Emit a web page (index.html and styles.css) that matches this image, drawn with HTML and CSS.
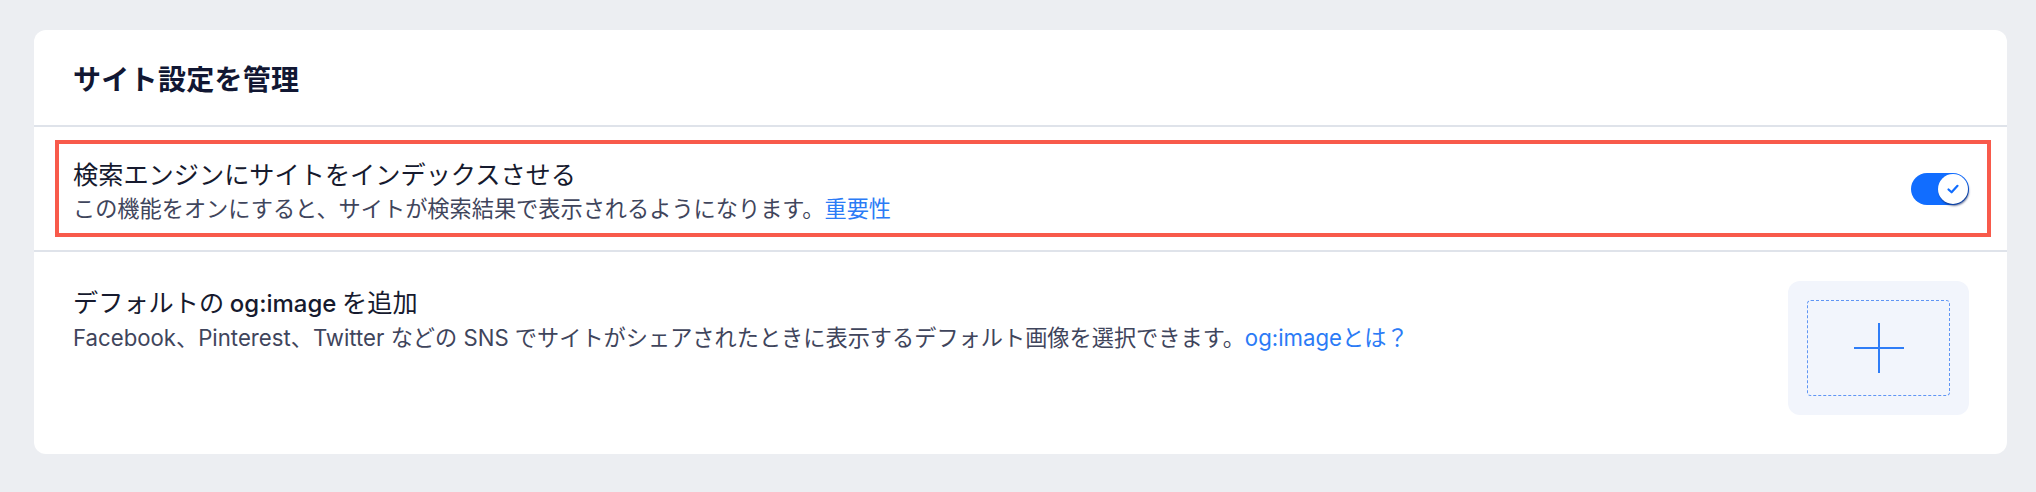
FILE: index.html
```html
<!DOCTYPE html>
<html lang="ja">
<head>
<meta charset="utf-8">
<title>サイト設定を管理</title>
<link rel="stylesheet" href="styles.css">
</head>
<body>
<main class="page">
  <section class="card">
    <header class="card-header">
      <h2 class="card-title">サイト設定を管理</h2>
    </header>
    <div class="row row-index">
      <div class="highlight">
        <div class="text">
          <div class="row-title">検索エンジンにサイトをインデックスさせる</div>
          <div class="row-sub">この機能をオンにすると、サイトが検索結果で表示されるようになります。<a class="link" href="#">重要性</a></div>
        </div>
        <div class="toggle" role="switch" aria-checked="true">
          <span class="knob">
            <svg class="check" viewBox="0 0 14 14" width="14" height="14"><polyline points="2.5,7.5 5.6,10.3 11.5,3.8" fill="none" stroke="#116dff" stroke-width="2.2" stroke-linecap="round" stroke-linejoin="round"/></svg>
          </span>
        </div>
      </div>
    </div>
    <div class="row row-og">
      <div class="text">
        <div class="row-title">デフォルトの <span class="latin">og:image</span> を追加</div>
        <div class="row-sub row-sub-latin">Facebook、Pinterest、Twitter などの SNS でサイトがシェアされたときに表示するデフォルト画像を選択できます。<a class="link" href="#">og:imageとは？</a></div>
      </div>
      <div class="uploader">
        <div class="dropzone">
          <svg class="plus" viewBox="0 0 50 50" width="50" height="50"><line x1="25" y1="0" x2="25" y2="50" stroke="#2f7df7" stroke-width="2"/><line x1="0" y1="25" x2="50" y2="25" stroke="#2f7df7" stroke-width="2"/></svg>
        </div>
      </div>
    </div>
  </section>
</main>
</body>
</html>
```
FILE: styles.css
```css
* { box-sizing: border-box; }
html, body {
  margin: 0;
  padding: 0;
  background: #eceef2;
  font-family: "Noto Sans CJK JP", "Noto Sans", sans-serif;
}
.page {
  padding: 30px 29px 36px 34px;
}
.card {
  background: #ffffff;
  border-radius: 12px;
  overflow: hidden;
}
.card-header {
  height: 97px;
  padding: 0 39px;
  display: flex;
  align-items: center;
  border-bottom: 2px solid #dfe3ea;
}
.card-title {
  margin: 0;
  font-size: 28px;
  line-height: 40px;
  font-weight: 700;
  color: #111733;
  letter-spacing: 0.3px;
}
.row-index {
  height: 125px;
  padding: 13px 16px 13px 21px;
  border-bottom: 2px solid #dfe3ea;
}
.highlight {
  height: 97px;
  border: 4px solid #f85a4b;
  display: flex;
  align-items: center;
  justify-content: space-between;
  padding: 0 18px 0 14px;
}
.text {
  display: flex;
  flex-direction: column;
}
.row-title {
  font-size: 25.2px;
  line-height: 36px;
  color: #161a2e;
  font-weight: 400;
}
.row-sub {
  font-size: 22.2px;
  line-height: 32px;
  color: #3f455c;
}
.row-sub-latin {
  font-family: "Inter", "Noto Sans CJK JP", sans-serif;
}
.latin {
  font-family: "Inter", "Noto Sans", sans-serif;
  font-size: 24px;
  font-weight: 500;
}
.link {
  color: #2b7bf6;
  text-decoration: none;
}
.toggle {
  width: 58px;
  height: 32px;
  border-radius: 16px;
  background: #116dff;
  position: relative;
  flex: none;
}
.knob {
  position: absolute;
  right: 1px;
  top: 1px;
  width: 30px;
  height: 30px;
  border-radius: 50%;
  background: #ffffff;
  box-shadow: 1px 2px 2px rgba(10, 30, 90, 0.6);
  display: flex;
  align-items: center;
  justify-content: center;
}
.check { display: block; }
.row-og {
  display: flex;
  justify-content: space-between;
  align-items: flex-start;
  padding: 29px 38px 39px 39px;
}
.row-og .text {
  padding-top: 2px;
}
.uploader {
  width: 181px;
  height: 134px;
  background: #f2f5fc;
  border-radius: 12px;
  padding: 19px;
  flex: none;
}
.dropzone {
  width: 100%;
  height: 100%;
  border: 1.5px dashed #5f95f4;
  border-radius: 4px;
  display: flex;
  align-items: center;
  justify-content: center;
}
.plus { display: block; }
```
